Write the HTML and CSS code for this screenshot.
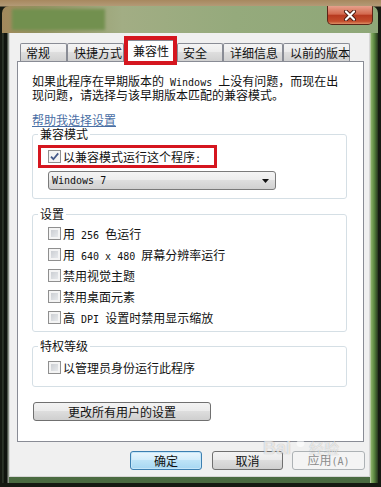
FILE: index.html
```html
<!DOCTYPE html>
<html lang="zh-CN">
<head>
    <meta charset="UTF-8">
    <meta name="viewport" content="width=device-width, initial-scale=1.0">
    <title>属性 - 兼容性</title>
    <link rel="stylesheet" href="styles.css">
</head>
<body>
    <!-- 창 전체 -->
    <div class="window">
        <!-- 제목줄 (흐림 처리된 제목 + 닫기) -->
        <div class="titlebar">
            <div class="title-blur"></div>
            <div class="close-btn">
                <svg width="14" height="11" viewBox="0 0 14 11">
                    <path d="M3 1.5 L11 9.5 M11 1.5 L3 9.5" stroke="#4a1a10" stroke-width="4" stroke-linecap="round"/>
                    <path d="M3 1.5 L11 9.5 M11 1.5 L3 9.5" stroke="#fff" stroke-width="2.2" stroke-linecap="round"/>
                </svg>
            </div>
        </div>

        <div class="frame">
            <div class="client">
                <!-- 탭 -->
                <ul class="tabs">
                    <li class="tab">常规</li>
                    <li class="tab">快捷方式</li>
                    <li class="tab on">兼容性</li>
                    <li class="tab">安全</li>
                    <li class="tab">详细信息</li>
                    <li class="tab">以前的版本</li>
                </ul>

                <!-- 탭 내용 -->
                <div class="panel">
                    <p class="desc">如果此程序在早期版本的<span class="en"> Windows </span>上没有问题，而现在出<br>现问题，请选择与该早期版本匹配的兼容模式。</p>
                    <a href="#" class="link">帮助我选择设置</a>

                    <fieldset class="group group-compat">
                        <legend>兼容模式</legend>
                        <div class="check hl">
                            <span class="box">
                                <svg width="11" height="11" viewBox="0 0 11 11"><path d="M2 5.6 L4.4 8.2 L9.2 2.4" fill="none" stroke="#44598a" stroke-width="1.8"/></svg>
                            </span>
                            <span>以兼容模式运行这个程序<span class="en">:</span></span>
                        </div>
                        <div class="combo">
                            <span class="en">Windows 7</span>
                            <svg class="arrow" width="7" height="4" viewBox="0 0 7 4"><path d="M0 0 H7 L3.5 4 Z" fill="#111"/></svg>
                        </div>
                    </fieldset>

                    <fieldset class="group group-set">
                        <legend>设置</legend>
                        <div class="check"><span class="box"></span><span>用<span class="en"> 256 </span>色运行</span></div>
                        <div class="check"><span class="box"></span><span>用<span class="en"> 640 x 480 </span>屏幕分辨率运行</span></div>
                        <div class="check"><span class="box"></span><span>禁用视觉主题</span></div>
                        <div class="check"><span class="box"></span><span>禁用桌面元素</span></div>
                        <div class="check"><span class="box"></span><span>高<span class="en"> DPI </span>设置时禁用显示缩放</span></div>
                    </fieldset>

                    <fieldset class="group group-priv">
                        <legend>特权等级</legend>
                        <div class="check"><span class="box"></span><span>以管理员身份运行此程序</span></div>
                    </fieldset>

                    <button class="btn btn-all">更改所有用户的设置</button>
                </div>

                <!-- 하단 버튼 -->
                <div class="actions">
                    <button class="btn btn-ok">确定</button>
                    <button class="btn btn-cancel">取消</button>
                    <button class="btn btn-apply">应用<span class="en">(A)</span></button>
                </div>
            </div>
        </div>

        <!-- 워터마크 -->
        <div class="watermark">
            <span class="wm-en">Bai</span>
            <svg width="16" height="16" viewBox="0 0 16 16">
                <circle cx="3" cy="7" r="2" fill="currentColor"/>
                <circle cx="6.5" cy="3" r="2" fill="currentColor"/>
                <circle cx="10.5" cy="3" r="2" fill="currentColor"/>
                <circle cx="14" cy="7" r="2" fill="currentColor"/>
                <ellipse cx="8.5" cy="11.5" rx="4" ry="3.5" fill="currentColor"/>
            </svg>
            <span class="wm-cn">经验</span>
        </div>
    </div>
</body>
</html>
```

FILE: styles.css
```css
*{
    box-sizing: border-box;
}
body{
    margin: 0;
    width: 381px;
    height: 487px;
    overflow: hidden;
    /* 위쪽은 갈색 바탕, 나머지는 어두운 배경 */
    background: linear-gradient(180deg, #a7885f 0, #b39a76 6px, #161a12 7px);
    font: 12px "Noto Sans CJK SC", sans-serif;
    color: #111;
}
.en{
    font-family: "DejaVu Sans Mono", monospace;
    font-size: 10px;
    white-space: pre;
}

/* 창 */
.window{
    position: relative;
    display: flex;
    flex-direction: column;
    width: 376px;
    height: 477px;
    margin: 6px 0 0 2px;
    border-radius: 7px 7px 0 0;
    overflow: hidden;
}
.titlebar{
    display: flex;
    align-items: flex-start;
    flex: none;
    height: 27px;
    background: linear-gradient(90deg, #a3895c 0, #939260 9%, #a2ad84 32%, #95aa7c 62%, #8ea778 100%);
}
.title-blur{
    width: 93px;
    height: 21px;
    margin: 3px 0 0 10px;
    background: #72904f;
    filter: blur(1.5px);
}
.close-btn{
    display: flex;
    align-items: center;
    justify-content: center;
    width: 46px;
    height: 19px;
    margin: 0 5px 0 auto;
    border: 1px solid #5b2417;
    border-top: none;
    border-radius: 0 0 5px 5px;
    background: linear-gradient(#e6a08c, #d3694e 45%, #b73a20 52%, #c34d2c 85%, #dd9066);
}

/* 창 테두리 */
.frame{
    flex: 1;
    display: flex;
    padding: 0 8px 6px 7px;
    background:
        linear-gradient(90deg, #1b2117 0, #3b4537 1px, #10140e 2px, #10140e 5px, #8c9488 6px) left top / 7px 100% no-repeat,
        linear-gradient(90deg, #dfe6d8 0, #8db06a 1px, #5d8a42 4px, #26361c 8px) right top / 8px 100% no-repeat,
        linear-gradient(#6d8c5f, #4a6a40);
}
.client{
    flex: 1;
    display: flex;
    flex-direction: column;
    padding: 7px 6px 0 8px;
    background: #f0f0f0;
    box-shadow: inset 1px 0 #d6d6d6, inset -1px 0 #d6d6d6, inset 0 -1px #d6d6d6;
}

/* 탭 */
.tabs{
    position: relative;
    z-index: 1;
    display: flex;
    align-items: flex-end;
    height: 21px;
    margin: 0 0 0 3px;
    padding: 0;
    list-style: none;
}
.tab{
    height: 18px;
    padding-left: 5px;
    line-height: 17px;
    border: 1px solid #898c95;
    border-bottom: none;
    border-radius: 2px 2px 0 0;
    background: linear-gradient(#f4f4f4, #ececec 45%, #dedede 50%, #d0d0d0);
    white-space: nowrap;
}
.tab:nth-child(1){ width: 47px; }
.tab:nth-child(2){ width: 57px; padding-left: 6px; }
.tab:nth-child(3){ width: 53px; padding-left: 8px; }
.tab:nth-child(4){ width: 46px; }
.tab:nth-child(5){ width: 60px; padding-left: 6px; }
.tab:nth-child(6){ width: 67px; padding-left: 6px; }
.tab.on{
    position: relative;
    height: 22px;
    margin-bottom: -1px;
    line-height: 19px;
    background: #fff;
}
/* 빨간 강조 박스 */
.tab.on::after{
    content: "";
    position: absolute;
    left: -1px;
    right: -1px;
    top: -5px;
    bottom: -3px;
    border: 4px solid #d5161f;
}

/* 탭 내용 */
.panel{
    height: 381px;
    padding: 13px 16px 0 14px;
    border: 1px solid #898c95;
    background: #fff;
}
.desc{
    margin: 0;
    line-height: 12px;
}
.link{
    display: block;
    width: max-content;
    margin-top: 12px;
    line-height: 14px;
    color: #4a6fa5;
}

/* 그룹 박스 */
.group{
    margin: 0;
    padding: 0 15px;
    min-width: 0;
    border: 1px solid #d5dfe5;
    border-radius: 3px;
}
.group legend{
    margin-left: -10px;
    padding: 0 2px;
    line-height: 14px;
}
.group-compat{
    margin-top: 0;
    padding-bottom: 8px;
}
.group-set{
    margin-top: 8px;
    padding-bottom: 3px;
}
.group-priv{
    margin-top: 7px;
    padding-bottom: 8px;
}
.group-priv .check{
    margin-top: 4px;
}

/* 체크박스 줄 */
.check{
    display: flex;
    align-items: center;
    gap: 2px;
    height: 21px;
    white-space: nowrap;
}
.group-set .check:first-of-type{
    margin-top: 2px;
}
.box{
    display: flex;
    align-items: center;
    justify-content: center;
    flex: none;
    width: 13px;
    height: 13px;
    border: 1px solid #8f8f8f;
    background: linear-gradient(135deg, #c4c7cc, #eef0f2);
    box-shadow: inset 0 0 0 2px #f4f4f4;
}
.check.hl{
    width: 179px;
    height: 23px;
    margin: 4px 0 0 -10px;
    padding-left: 7px;
    border: 3px solid #d5161f;
}
.check.hl .box{
    background: #f4f4f4;
    box-shadow: none;
}

/* 콤보박스 */
.combo{
    display: flex;
    align-items: center;
    width: 228px;
    height: 19px;
    margin-top: 3px;
    padding: 0 6px 0 3px;
    border: 1px solid #7a7a7a;
    border-radius: 3px;
    background: linear-gradient(#f4f4f4, #ececec 45%, #dedede 50%, #d0d0d0);
}
.combo .arrow{
    margin-left: auto;
}

/* 버튼 */
.btn{
    height: 19px;
    padding: 0;
    border: 1px solid #707070;
    border-radius: 3px;
    background: linear-gradient(#f3f3f3, #ebebeb 45%, #dddddd 50%, #cfcfcf);
    font: inherit;
    line-height: 16px;
    color: #111;
    text-align: center;
}
.btn-all{
    display: block;
    width: 178px;
    margin: 15px 0 0 1px;
}
.actions{
    display: flex;
    justify-content: flex-end;
    gap: 9px;
    margin: 9px -1px 0 0;
}
.btn-ok{
    width: 72px;
    margin-right: 1px;
    border-color: #3c7fb1;
    background: linear-gradient(#eaf6fd, #d3edfb 45%, #bde3f7 50%, #a6d7f2);
    box-shadow: inset 0 0 0 1px #c5e6f8;
}
.btn-cancel{
    width: 71px;
}
.btn-apply{
    width: 73px;
    border-color: #adb2b5;
    background: #f4f4f4;
    color: #8c8c8c;
}

/* 워터마크 */
.watermark{
    position: absolute;
    left: 261px;
    top: 426px;
    display: flex;
    align-items: flex-end;
    gap: 1px;
    color: rgba(255, 255, 255, .7);
    text-shadow: 0 0 1px rgba(0, 0, 0, .3);
    pointer-events: none;
}
.watermark svg{
    margin-bottom: 10px;
    opacity: .8;
}
.wm-en{
    font: bold 18px "Liberation Sans", sans-serif;
    line-height: 20px;
}
.wm-cn{
    font-size: 15px;
    line-height: 20px;
}
```
